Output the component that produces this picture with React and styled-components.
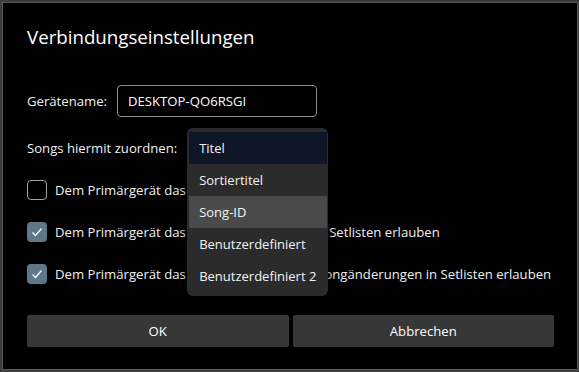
import React from "react";
import styled, { createGlobalStyle } from "styled-components";

const Global = createGlobalStyle`
  html, body { margin: 0; padding: 0; background: #3d3d3d; }
  body { width: 579px; height: 372px; overflow: hidden; font-family: "Open Sans", "Noto Sans", sans-serif; }
  * { box-sizing: border-box; }
`;

const Dialog = styled.div`
  margin: 2px 1px 0 2px;
  width: 576px;
  height: 368px;
  background: #000;
  border: 1px solid #5a5a5a;
  padding: 20px 23px 0 24px;
  display: flex;
  flex-direction: column;
  color: #fff;
`;

const Title = styled.h1`
  margin: 0;
  font-size: 18.7px;
  line-height: 28px;
  font-weight: 400;
  color: #fff;
`;

const Row = styled.div`
  display: flex;
  align-items: center;
  gap: ${(p) => p.$gap || 10}px;
  height: ${(p) => p.$h || 32}px;
  margin-top: ${(p) => p.$mt || 0}px;
  position: relative;
`;

const Label = styled.span`
  font-size: 13.15px;
  color: #f0f0f0;
  white-space: nowrap;
`;

const Input = styled.div`
  width: 200px;
  height: 32px;
  border: 1px solid #8c8c8c;
  border-radius: 4px;
  padding: 0 10px;
  display: flex;
  align-items: center;
  font-size: 13.15px;
  color: #fff;
`;

const Combo = styled.div`
  position: relative;
  width: 141px;
  height: 32px;
`;

const Popup = styled.div`
  position: absolute;
  left: 0;
  top: -4px;
  width: 141px;
  padding: 4px 1px 4px 2px;
  background: #2b2b2b;
  border-radius: 6px;
  box-shadow: 0 2px 8px rgba(0,0,0,0.6);
  z-index: 5;
`;

const Item = styled.div`
  height: 32px;
  padding: 0 0 0 10px;
  display: flex;
  align-items: center;
  font-size: 13px;
  color: #f2f2f2;
  background: ${(p) => (p.$sel ? "#0e1627" : p.$hover ? "#4a4a4a" : "transparent")};
`;

const Box = styled.span`
  width: 20px;
  height: 20px;
  border-radius: 4px;
  flex: none;
  display: flex;
  align-items: center;
  justify-content: center;
  background: ${(p) => (p.$on ? "#5f7889" : "transparent")};
  border: ${(p) => (p.$on ? "none" : "1px solid #a3a3a3")};
`;

const Buttons = styled.div`
  display: grid;
  grid-template-columns: 1fr 1fr;
  gap: 4px;
  margin-top: 31px;
`;

const Button = styled.button`
  height: 32px;
  border: none;
  border-radius: 2px;
  background: #373737;
  color: #fff;
  font-family: inherit;
  font-size: 13.15px;
`;

const Check = () => (
  <svg width="14" height="14" viewBox="0 0 14 14">
    <polyline points="2.5,7.5 5.5,10.5 11.5,3.5" fill="none" stroke="#fff" strokeWidth="1.3" />
  </svg>
);

const CheckRow = ({ on, text, mt }) => (
  <Row $h={20} $mt={mt} $gap={8}>
    <Box $on={on}>{on && <Check />}</Box>
    <Label>{text}</Label>
  </Row>
);

export default function App() {
  const items = ["Titel", "Sortiertitel", "Song-ID", "Benutzerdefiniert", "Benutzerdefiniert 2"];
  return (
    <>
      <Global />
      <Dialog>
        <Title>Verbindungseinstellungen</Title>
        <Row $mt={34}>
          <Label>Gerätename:</Label>
          <Input>DESKTOP-QO6RSGI</Input>
        </Row>
        <Row $mt={15}>
          <Label>Songs hiermit zuordnen:</Label>
          <Combo>
            <Popup>
              {items.map((t, i) => (
                <Item key={t} $sel={i === 0} $hover={i === 2}>{t}</Item>
              ))}
            </Popup>
          </Combo>
        </Row>
        <CheckRow on={false} mt={16} text="Dem Primärgerät das Steuern erlauben" />
        <CheckRow on mt={22} text="Dem Primärgerät das Anzeigen von Songs in Setlisten erlauben" />
        <CheckRow on mt={22} text="Dem Primärgerät das Synchronisieren von Songänderungen in Setlisten erlauben" />
        <Buttons>
          <Button>OK</Button>
          <Button>Abbrechen</Button>
        </Buttons>
      </Dialog>
    </>
  );
}
